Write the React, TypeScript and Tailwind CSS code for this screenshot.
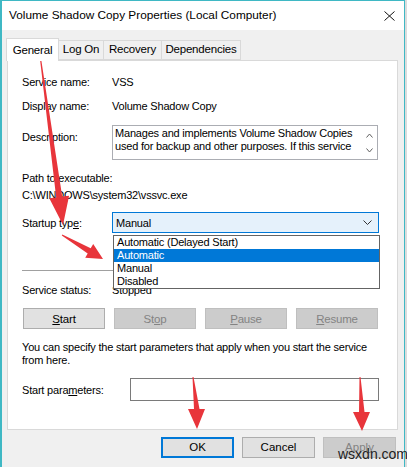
import React from "react";

const font = { fontFamily: '"Liberation Sans", Arial, sans-serif' };

function Btn({ children, disabled, wide, focus }: { children: React.ReactNode; disabled?: boolean; wide?: boolean; focus?: boolean }) {
  return (
    <div
      className={
        "flex h-[21px] items-center justify-center border text-[11.5px] " +
        (wide ? "w-[82px] " : "w-[73px] ") +
        (disabled
          ? "border-[#bfbfbf] bg-[#cccccc] text-[#838383]"
          : focus
          ? "border-2 border-[#0078d7] bg-[#e1e1e1] text-black"
          : "border-[#adadad] bg-[#e1e1e1] text-black")
      }
    >
      {children}
    </div>
  );
}

function Arrows() {
  return (
    <svg className="pointer-events-none absolute left-0 top-0" width="407" height="467" viewBox="0 0 407 467">
      <g fill="#e8353b">
        <polygon points="39.5,55 40.5,55 62.2,196.6 69.1,195.7 63,225 49.3,198.3 56.2,197.4" />
        <polygon points="61.8,235.4 62.3,234.6 90.7,248.3 93.2,244 103,259 85.2,257.8 87.7,253.5" />
        <polygon points="192.5,377 193.5,377 199.5,409 205,409 197,429 188,409 194,409" />
        <polygon points="359.5,377 360.5,377 364.5,412 370,412 362,431 353,412 359,412" />
      </g>
    </svg>
  );
}

export default function App() {
  return (
    <div className="relative h-[467px] w-[407px] overflow-hidden bg-[#dcdcdc] text-black" style={font}>
      <div className="flex h-[467px] w-[405px] flex-col border-l-2 border-r border-t border-[#3fb8c4] bg-[#f0f0f0]">
        {/* Title bar */}
        <div className="flex h-[29px] shrink-0 items-center justify-between bg-white pl-[7px] pr-[9px]">
          <span className="whitespace-nowrap text-[11.8px]">Volume Shadow Copy Properties (Local Computer)</span>
          <svg width="11" height="10" viewBox="0 0 11 10">
            <path d="M0.5 0.5 L10.5 9.5 M10.5 0.5 L0.5 9.5" stroke="#111" strokeWidth="1" fill="none" />
          </svg>
        </div>

        {/* Tabs */}
        <div className="mt-[8px] flex h-[22px] items-end pl-[4px] text-[11.5px] tracking-[-0.2px]">
          <div className="relative z-10 -mb-px flex h-[23px] w-[53px] items-start justify-center border border-b-0 border-[#d9d9d9] bg-white pt-[3px]">
            General
          </div>
          <div className="flex h-[20px] w-[45px] items-center justify-center border border-l-0 border-[#d9d9d9]">Log On</div>
          <div className="flex h-[20px] w-[58px] items-center justify-center border border-l-0 border-[#d9d9d9]">Recovery</div>
          <div className="flex h-[20px] w-[79px] items-center justify-center border border-l-0 border-[#d9d9d9]">Dependencies</div>
        </div>

        {/* Panel */}
        <div className="relative ml-[5px] h-[370px] w-[391px] whitespace-nowrap border border-[#d9d9d9] bg-white pl-[14px] pr-[18px] pt-[13px] text-[11px] leading-[16px] tracking-[-0.2px]">
          <div className="flex">
            <span className="w-[90px]">Service name:</span>
            <span>VSS</span>
          </div>
          <div className="mt-[8px] flex">
            <span className="w-[90px]">Display name:</span>
            <span>Volume Shadow Copy</span>
          </div>
          <div className="mt-[11px] flex">
            <span className="w-[90px] pt-[4px]">Description:</span>
            <div className="flex h-[35px] w-[266px] justify-between border border-[#abadb3] pl-[2px] pr-[4px] pt-px leading-[13px]">
              <span>
                Manages and implements Volume Shadow Copies
                <br />
                used for backup and other purposes. If this service
              </span>
              <div className="flex flex-col justify-between py-[6px]">
                <svg width="7" height="5" viewBox="0 0 7 5">
                  <path d="M0.5 4.5 L3.5 1 L6.5 4.5" stroke="#606060" fill="none" />
                </svg>
                <svg width="7" height="5" viewBox="0 0 7 5">
                  <path d="M0.5 0.5 L3.5 4 L6.5 0.5" stroke="#606060" fill="none" />
                </svg>
              </div>
            </div>
          </div>
          <div className="mt-[10px]">Path to executable:</div>
          <div className="mt-px">C:\WINDOWS\system32\vssvc.exe</div>
          <div className="mt-[9px] flex items-center">
            <span className="w-[90px]">
              Startup typ<span className="underline">e</span>:
            </span>
            <div className="flex h-[21px] w-[267px] items-center justify-between border border-[#0078d7] bg-[#e5f1fb] pl-[3px] pr-[6px]">
              <span>Manual</span>
              <svg width="9" height="5" viewBox="0 0 9 5">
                <path d="M0.5 0.5 L4.5 4.5 L8.5 0.5" stroke="#333" fill="none" />
              </svg>
            </div>
          </div>
          <div className="mt-[37px] h-px bg-[#a0a0a0]" />
          <div className="mt-[11px] flex">
            <span className="w-[90px]">Service status:</span>
            <span>Stopped</span>
          </div>
          <div className="ml-px mt-[10px] flex gap-[9px]">
            <Btn wide>
              <span className="underline">S</span>tart
            </Btn>
            <Btn wide disabled>
              St<span className="underline">o</span>p
            </Btn>
            <Btn wide disabled>
              <span className="underline">P</span>ause
            </Btn>
            <Btn wide disabled>
              <span className="underline">R</span>esume
            </Btn>
          </div>
          <div className="mt-[12px] leading-[13px]">
            You can specify the start parameters that apply when you start the service
            <br />
            from here.
          </div>
          <div className="mt-[11px] flex items-center">
            <span className="w-[108px]">
              Start para<span className="underline">m</span>eters:
            </span>
            <div className="h-[23px] w-[249px] border border-[#7a7a7a]" />
          </div>

          {/* Open dropdown list */}
          <div className="absolute left-[105px] top-[174px] w-[267px] border border-[#646464] bg-white leading-[13px]">
            <div className="pl-[3px]">Automatic (Delayed Start)</div>
            <div className="bg-[#0078d7] pl-[3px] text-white">Automatic</div>
            <div className="pl-[3px]">Manual</div>
            <div className="pl-[3px]">Disabled</div>
          </div>
        </div>

        {/* Dialog buttons */}
        <div className="mt-[7px] flex gap-[8px] pl-[159px]">
          <Btn focus>OK</Btn>
          <Btn>Cancel</Btn>
          <Btn disabled>Apply</Btn>
        </div>
      </div>

      <span className="absolute left-[338px] top-[444px] text-[14px] text-[#222]">wsxdn.com</span>
      <Arrows />
    </div>
  );
}
